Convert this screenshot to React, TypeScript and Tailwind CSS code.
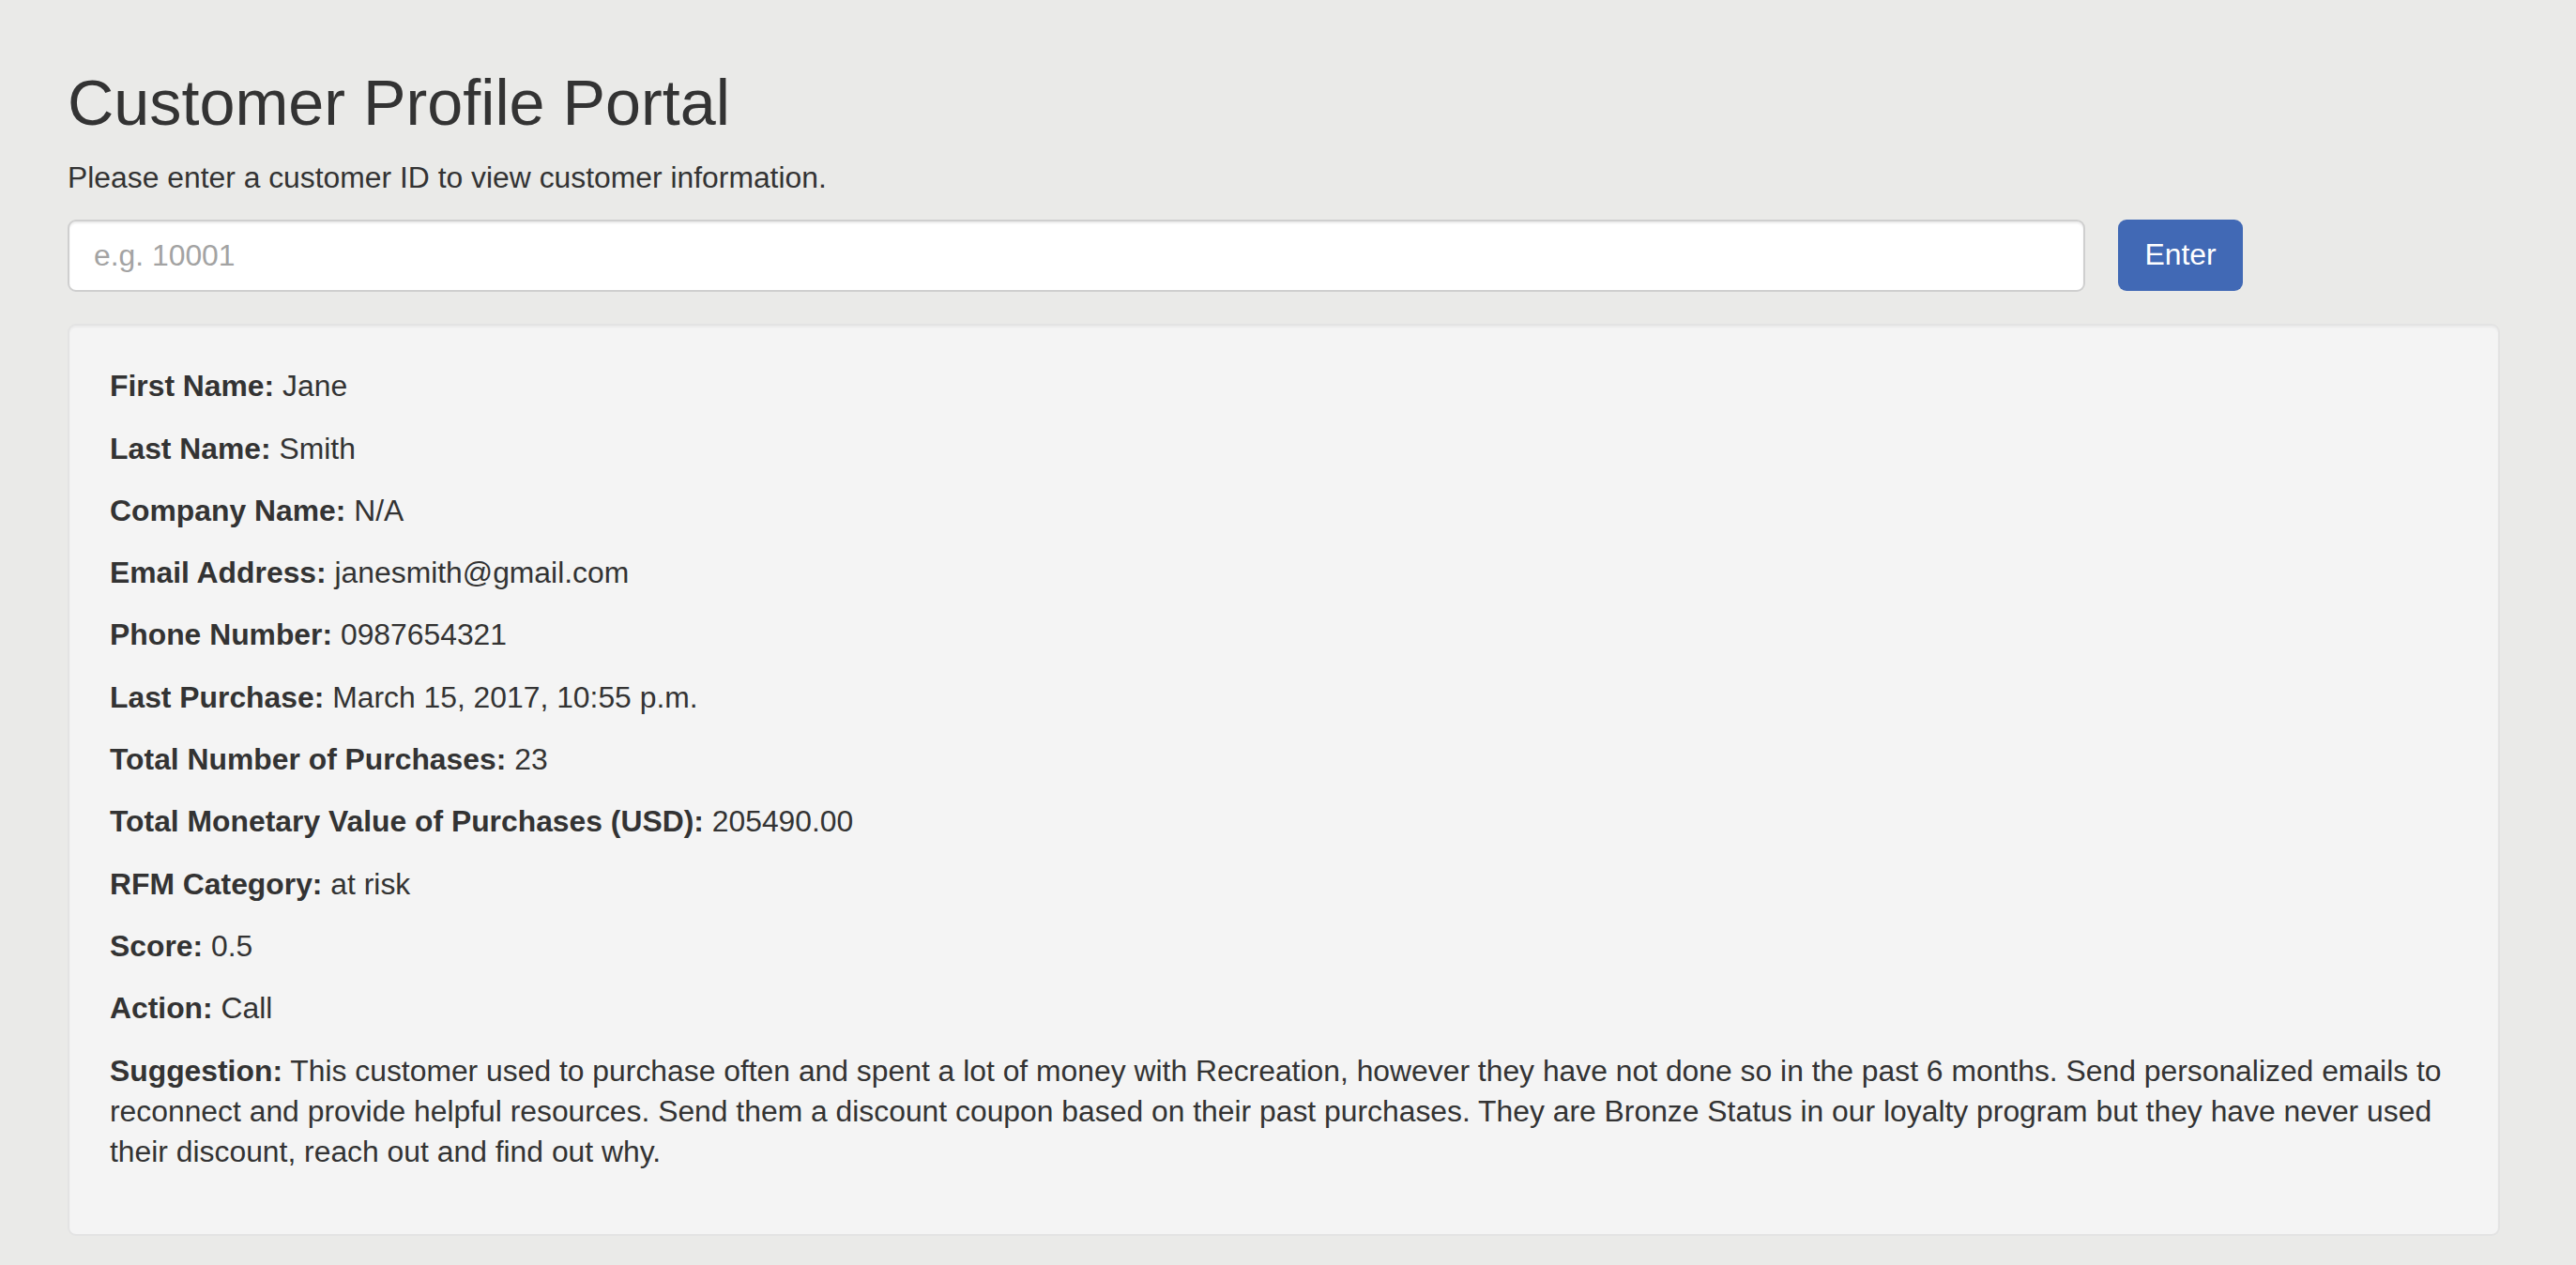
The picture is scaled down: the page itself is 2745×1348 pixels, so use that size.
import React from 'react';

interface Field {
  label: string;
  value: string;
}

const fields: Field[] = [
  { label: 'First Name', value: 'Jane' },
  { label: 'Last Name', value: 'Smith' },
  { label: 'Company Name', value: 'N/A' },
  { label: 'Email Address', value: 'janesmith@gmail.com' },
  { label: 'Phone Number', value: '0987654321' },
  { label: 'Last Purchase', value: 'March 15, 2017, 10:55 p.m.' },
  { label: 'Total Number of Purchases', value: '23' },
  { label: 'Total Monetary Value of Purchases (USD)', value: '205490.00' },
  { label: 'RFM Category', value: 'at risk' },
  { label: 'Score', value: '0.5' },
  { label: 'Action', value: 'Call' },
  {
    label: 'Suggestion',
    value:
      'This customer used to purchase often and spent a lot of money with Recreation, however they have not done so in the past 6 months. Send personalized emails to reconnect and provide helpful resources. Send them a discount coupon based on their past purchases. They are Bronze Status in our loyalty program but they have never used their discount, reach out and find out why.',
  },
];

const App: React.FC = () => {
  return (
    <div
      className="min-h-screen bg-[#eaeae8] pl-[72px] pr-[81px] pt-[72px] pb-[34px] text-[#333333]"
      style={{ fontFamily: '"Liberation Sans", Arial, sans-serif' }}
    >
      <h1 className="text-[68.3px] leading-[74px] font-normal">Customer Profile Portal</h1>
      <p className="mt-[22px] text-[31.85px] leading-[43.3px]">
        Please enter a customer ID to view customer information.
      </p>

      <div className="mt-[23px] flex items-start gap-[35px]">
        <input
          type="text"
          placeholder="e.g. 10001"
          className="w-[2150px] h-[77px] rounded-[9px] border-2 border-[#cfcfcf] bg-white px-[26px] text-[31.85px] text-[#555] shadow-[inset_0_2px_2px_rgba(0,0,0,0.075)] placeholder:text-[#a3a3a3] outline-none"
        />
        <button className="h-[76px] w-[133px] rounded-[9px] bg-[#4169b5] text-[31.85px] text-white">
          Enter
        </button>
      </div>

      <div className="mt-[34px] rounded-[9px] border-2 border-[#e3e3e3] bg-[#f4f4f4] px-[43px] pt-[43px] pb-[43px] shadow-[inset_0_2px_2px_rgba(0,0,0,0.04)]">
        {fields.map((f) => (
          <p key={f.label} className="mb-[23px] text-[31.85px] leading-[43.3px]">
            <strong className="font-bold">{f.label}:</strong> {f.value}
          </p>
        ))}
      </div>
    </div>
  );
};

export default App;
